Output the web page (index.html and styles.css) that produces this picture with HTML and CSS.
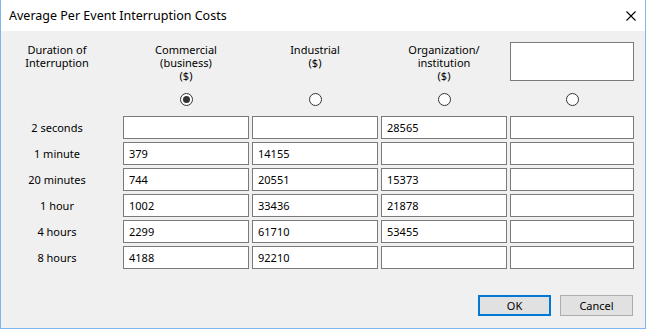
FILE: index.html
```html
<!DOCTYPE html>
<html lang="en">
<head>
    <meta charset="UTF-8">
    <title>Average Per Event Interruption Costs</title>
    <link rel="stylesheet" href="styles.css">
</head>
<body>
    <div class="window">
        <div class="titlebar">
            <span class="title">Average Per Event Interruption Costs</span>
            <svg class="close" width="10" height="10" viewBox="0 0 10 10">
                <path d="M0.5 0.5 L9.5 9.5 M9.5 0.5 L0.5 9.5" stroke="#000" stroke-width="1.1" fill="none"/>
            </svg>
        </div>
        <div class="content">
            <div class="grid">
                <div class="head label">Duration of<br>Interruption</div>
                <div class="head">Commercial<br>(business)<br>($)</div>
                <div class="head">Industrial<br>($)</div>
                <div class="head">Organization/<br>institution<br>($)</div>
                <div class="head"><div class="box custom-head"></div></div>

                <div class="radio-cell"></div>
                <div class="radio-cell"><span class="radio checked"></span></div>
                <div class="radio-cell"><span class="radio"></span></div>
                <div class="radio-cell"><span class="radio"></span></div>
                <div class="radio-cell"><span class="radio"></span></div>

                <div class="label">2 seconds</div>
                <div class="box"></div>
                <div class="box"></div>
                <div class="box">28565</div>
                <div class="box"></div>

                <div class="label">1 minute</div>
                <div class="box">379</div>
                <div class="box">14155</div>
                <div class="box"></div>
                <div class="box"></div>

                <div class="label">20 minutes</div>
                <div class="box">744</div>
                <div class="box">20551</div>
                <div class="box">15373</div>
                <div class="box"></div>

                <div class="label">1 hour</div>
                <div class="box">1002</div>
                <div class="box">33436</div>
                <div class="box">21878</div>
                <div class="box"></div>

                <div class="label">4 hours</div>
                <div class="box">2299</div>
                <div class="box">61710</div>
                <div class="box">53455</div>
                <div class="box"></div>

                <div class="label">8 hours</div>
                <div class="box">4188</div>
                <div class="box">92210</div>
                <div class="box"></div>
                <div class="box"></div>
            </div>
            <div class="buttons">
                <button class="btn default">OK</button>
                <button class="btn">Cancel</button>
            </div>
        </div>
    </div>
</body>
</html>
```

FILE: styles.css
```css
html, body {
    margin: 0;
    padding: 0;
    background: #f0f0f0;
}

body {
    font-family: 'Noto Sans', 'Open Sans', sans-serif;
    font-size: 11px;
    color: #000;
}

.window {
    width: 644px;
    height: 328px;
    border: 1px solid #7fb6ee;
    border-top: none;
    background: #f0f0f0;
    display: flex;
    flex-direction: column;
}

.titlebar {
    height: 31px;
    background: #fff;
    display: flex;
    align-items: center;
    justify-content: space-between;
    padding: 0 9px 0 8px;
}

.title {
    font-size: 12.5px;
    margin-top: -1px;
}

.close {
    display: block;
}

.content {
    flex: 1;
    display: flex;
    flex-direction: column;
    padding-top: 11px;
}

.grid {
    display: grid;
    grid-template-columns: 119px 126px 126px 126px 124px;
    grid-template-rows: 39px 29px repeat(6, 23px);
    column-gap: 3px;
    row-gap: 3px;
}

.head {
    text-align: center;
    line-height: 13px;
    padding-top: 1px;
}

.head .box {
    height: 39px;
    margin-top: -1px;
}

.label {
    text-align: center;
    padding-right: 7px;
}

.grid > .label:not(.head) {
    display: flex;
    align-items: center;
    justify-content: center;
}

.radio-cell {
    display: flex;
    align-items: center;
    justify-content: center;
    padding-top: 1px;
}

.radio {
    box-sizing: border-box;
    width: 13px;
    height: 13px;
    border: 1px solid #333;
    border-radius: 50%;
    background: #fff;
    display: flex;
    align-items: center;
    justify-content: center;
}

.radio.checked::after {
    content: '';
    width: 7px;
    height: 7px;
    border-radius: 50%;
    background: #333;
}

.box {
    box-sizing: border-box;
    border: 1px solid #7a7a7a;
    background: #fff;
    padding: 0 5px;
    display: flex;
    align-items: center;
    height: 23px;
}

.buttons {
    display: flex;
    justify-content: flex-end;
    gap: 9px;
    margin-top: 26px;
    padding-right: 12px;
}

.btn {
    box-sizing: border-box;
    width: 73px;
    height: 21px;
    background: #e1e1e1;
    border: 1px solid #adadad;
    font-family: 'Noto Sans', 'Open Sans', sans-serif;
    font-size: 11px;
    padding: 0;
    color: #000;
}

.btn.default {
    border: 2px solid #0078d7;
}
```
